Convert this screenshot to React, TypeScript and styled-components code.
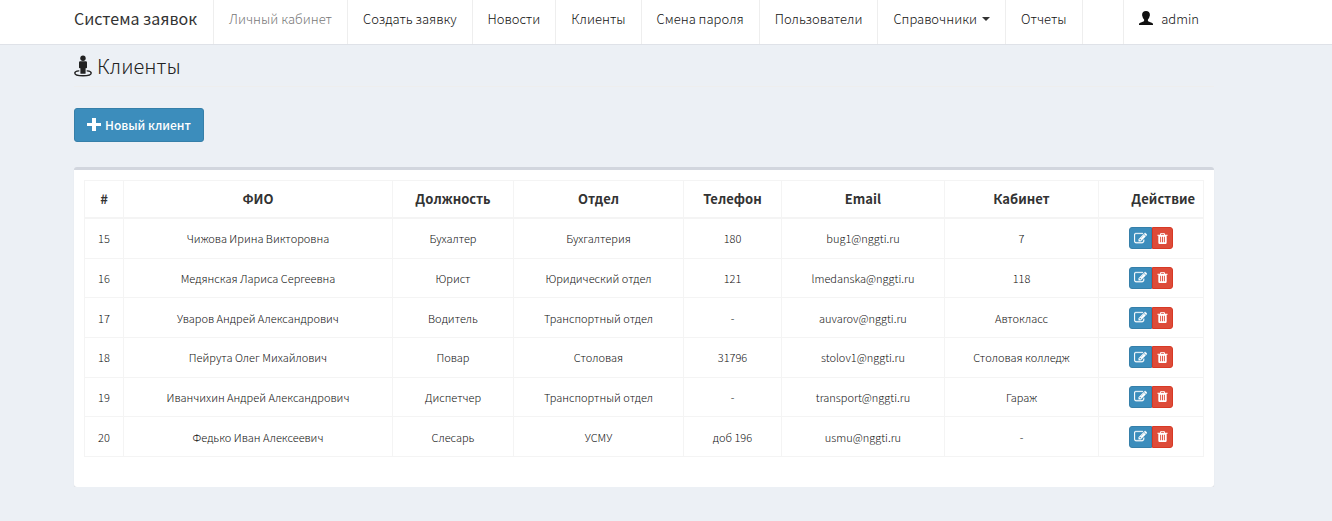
import React from "react";
import styled, { createGlobalStyle, css } from "styled-components";

const GlobalStyle = createGlobalStyle`
  *, *::before, *::after { box-sizing: border-box; }
  body {
    margin: 0;
    background: #ecf0f5;
    color: #333;
    font-family: "Noto Sans CJK SC", "Open Sans", sans-serif;
    font-size: 13px;
    line-height: 20px;
  }
  svg { flex-shrink: 0; }
`;

const Header = styled.header`
  background: #fff;
  border-bottom: 1px solid #dfe2e8;
  padding-right: 44px;
`;

const Container = styled.div`
  max-width: 1170px;
  margin: 0 auto;
  padding: 0 15px;
`;

const NavBar = styled(Container)`
  display: flex;
  align-items: stretch;
`;

const Brand = styled.a`
  padding: 8px 16px 16px 0;
  border-right: 1px solid #eee;
  color: #333;
  font-size: 16px;
  text-decoration: none;
  white-space: nowrap;
`;

const NavList = styled.ul`
  display: flex;
  margin: 0;
  padding: 0;
  list-style: none;
`;

const NavItem = styled.li`
  display: flex;
  border-right: 1px solid #eee;
`;

const NavLink = styled.a<{ $muted?: boolean }>`
  display: flex;
  align-items: center;
  padding: 9px 15px 15px;
  color: ${(p) => (p.$muted ? "#777" : "#111")};
  font-weight: 300;
  text-decoration: none;
  white-space: nowrap;
`;

const UserLink = styled(NavLink)`
  gap: 8px;
  margin-left: auto;
  border-left: 1px solid #eee;
`;

const Caret = styled.span`
  margin-left: 5px;
  border-top: 4px solid #333;
  border-left: 4px solid transparent;
  border-right: 4px solid transparent;
`;

const Page = styled.main`
  padding-right: 44px;
`;

const Title = styled.h1`
  display: flex;
  align-items: center;
  gap: 5px;
  margin: 0 0 21px;
  padding: 8px 0 8px;
  border-bottom: 1px solid #eee;
  color: #222;
  font-size: 20px;
  font-weight: 300;
  line-height: 25px;
`;

const PrimaryButton = styled.button`
  display: inline-flex;
  align-items: center;
  gap: 4px;
  height: 34px;
  padding: 0 12px;
  border: 1px solid #367fa9;
  border-radius: 3px;
  background: #3c8dbc;
  color: #fff;
  font: inherit;
  font-size: 12px;
  font-weight: 500;
  cursor: pointer;
`;

const Panel = styled.section`
  margin-top: 25px;
  padding: 10px 10px 30px;
  border-top: 3px solid #d2d6de;
  border-radius: 3px;
  background: #fff;
  box-shadow: 0 1px 1px rgba(0, 0, 0, 0.1);
`;

const Table = styled.table`
  width: 100%;
  height: 277px;
  table-layout: fixed;
  border-collapse: collapse;
  text-align: center;
`;

const cell = css`
  padding: 0 8px;
  border: 1px solid #f4f4f4;
`;

const HeadCell = styled.th<{ $align?: string }>`
  ${cell}
  height: 37px;
  border-bottom-width: 2px;
  font-weight: 700;
  text-align: ${(p) => p.$align || "center"};
`;

const Cell = styled.td`
  ${cell}
  color: #111;
  font-size: 11px;
  font-weight: 300;
`;

const Actions = styled.div`
  display: flex;
  justify-content: center;
`;

const ActionButton = styled.button<{ $danger?: boolean }>`
  display: flex;
  align-items: center;
  justify-content: center;
  width: ${(p) => (p.$danger ? 21 : 23)}px;
  height: 22px;
  padding: 0;
  border: 1px solid ${(p) => (p.$danger ? "#d73925" : "#367fa9")};
  border-radius: ${(p) => (p.$danger ? "0 3px 3px 0" : "3px 0 0 3px")};
  background: ${(p) => (p.$danger ? "#dd4b39" : "#3c8dbc")};
  color: #fff;
  cursor: pointer;
`;

const StreetViewIcon = () => (
  <svg width="18" height="22" viewBox="0 0 18 22" fill="currentColor" aria-hidden="true">
    <circle cx="9" cy="3.200" r="2.700" />
    <path d="M6.200 6.200h5.600q1.200 0 1.200 1.200v5q0 .8-.8.8h-.6v5q0 .6-.6.6H7q-.6 0-.6-.6v-5h-.6q-.8 0-.8-.8v-5Q5 6.200 6.200 6.200z" />
    <path
      d="M4.800 15.900C2.200 16.200.8 17 .8 18c0 1.700 3.600 2.800 8.200 2.800s8.200-1.100 8.200-2.800c0-1-1.400-1.800-4-2.100"
      fill="none"
      stroke="currentColor"
      strokeWidth="1.400"
      strokeLinecap="round"
    />
  </svg>
);

const PlusIcon = () => (
  <svg width="14" height="14" viewBox="0 0 14 14" fill="currentColor" aria-hidden="true">
    <path d="M5 0h4v5h5v3H9v5H5V8H0V5h5z" />
  </svg>
);

const UserIcon = () => (
  <svg width="14" height="16" viewBox="0 0 14 16" fill="currentColor" aria-hidden="true">
    <path d="M7 0C4.600 0 3 1.500 3.100 3.800c0 .9.200 1.500.5 2 .2 1.300.8 2.100 1.500 2.700v1.200c0 .4-.3.700-.8.900C1.900 11.600 0 12 0 13.200V14h14v-.8c0-1.200-1.900-1.600-4.300-2.600-.5-.2-.8-.5-.8-.9V8.500c.7-.6 1.300-1.400 1.500-2.700.3-.5.5-1.100.5-2C11 1.500 9.400 0 7 0z" />
  </svg>
);

const EditIcon = () => (
  <svg width="13" height="13" viewBox="0 0 1792 1792" fill="currentColor" aria-hidden="true">
    <path
      stroke="currentColor"
      strokeWidth="40"
      d="M888 1184l116-116-152-152-116 116v56h96v96h56zm440-720q-16-16-33 1l-350 350q-17 17-1 33t33-1l350-350q17-17 1-33zm80 594v190q0 119-84.500 203.500t-203.500 84.500h-832q-119 0-203.500-84.500t-84.500-203.500v-832q0-119 84.500-203.500t203.500-84.500h832q63 0 117 25 15 7 18 23 3 17-9 29l-49 49q-14 14-32 8-23-6-45-6h-832q-66 0-113 47t-47 113v832q0 66 47 113t113 47h832q66 0 113-47t47-113v-126q0-13 9-22l64-64q15-15 35-7t20 29zm-96-738l288 288-672 672h-288v-288zm444 132l-92 92-288-288 92-92q28-28 68-28t68 28l152 152q28 28 28 68t-28 68z"
    />
  </svg>
);

const TrashIcon = () => (
  <svg width="13" height="13" viewBox="0 0 1792 1792" fill="currentColor" aria-hidden="true">
    <path d="M704 1376v-704q0-14-9-23t-23-9h-64q-14 0-23 9t-9 23v704q0 14 9 23t23 9h64q14 0 23-9t9-23zm256 0v-704q0-14-9-23t-23-9h-64q-14 0-23 9t-9 23v704q0 14 9 23t23 9h64q14 0 23-9t9-23zm256 0v-704q0-14-9-23t-23-9h-64q-14 0-23 9t-9 23v704q0 14 9 23t23 9h64q14 0 23-9t9-23zm-544-992h448l-48-117q-7-9-17-11h-317q-10 2-17 11zm928 32v64q0 14-9 23t-23 9h-96v948q0 83-47 143.500t-113 60.500h-832q-66 0-113-58.500t-47-141.500v-952h-96q-14 0-23-9t-9-23v-64q0-14 9-23t23-9h309l70-167q15-37 54-63t79-26h320q40 0 79 26t54 63l70 167h309q14 0 23 9t9 23z" />
  </svg>
);

const navItems: { label: string; muted?: boolean; menu?: boolean }[] = [
  { label: "Личный кабинет", muted: true },
  { label: "Создать заявку" },
  { label: "Новости" },
  { label: "Клиенты" },
  { label: "Смена пароля" },
  { label: "Пользователи" },
  { label: "Справочники", menu: true },
  { label: "Отчеты" },
];

const columns = [
  { label: "#", width: 39 },
  { label: "ФИО", width: 269 },
  { label: "Должность", width: 121 },
  { label: "Отдел", width: 170 },
  { label: "Телефон", width: 98 },
  { label: "Email", width: 163 },
  { label: "Кабинет", width: 154 },
  { label: "Действие", width: 105, align: "right" },
];
const totalWidth = columns.reduce((sum, c) => sum + c.width, 0);

const clients = [
  ["15", "Чижова Ирина Викторовна", "Бухалтер", "Бухгалтерия", "180", "bug1@nggti.ru", "7"],
  ["16", "Медянская Лариса Сергеевна", "Юрист", "Юридический отдел", "121", "lmedanska@nggti.ru", "118"],
  ["17", "Уваров Андрей Александрович", "Водитель", "Транспортный отдел", "-", "auvarov@nggti.ru", "Автокласс"],
  ["18", "Пейрута Олег Михайлович", "Повар", "Столовая", "31796", "stolov1@nggti.ru", "Столовая колледж"],
  ["19", "Иванчихин Андрей Александрович", "Диспетчер", "Транспортный отдел", "-", "transport@nggti.ru", "Гараж"],
  ["20", "Федько Иван Алексеевич", "Слесарь", "УСМУ", "доб 196", "usmu@nggti.ru", "-"],
];

export default function App() {
  return (
    <>
      <GlobalStyle />
      <Header>
        <NavBar as="nav">
          <Brand href="#">Система заявок</Brand>
          <NavList>
            {navItems.map((item) => (
              <NavItem key={item.label}>
                <NavLink href="#" $muted={item.muted}>
                  {item.label}
                  {item.menu && <Caret />}
                </NavLink>
              </NavItem>
            ))}
          </NavList>
          <UserLink href="#">
            <UserIcon />
            admin
          </UserLink>
        </NavBar>
      </Header>
      <Page>
        <Container>
          <Title>
            <StreetViewIcon />
            Клиенты
          </Title>
          <PrimaryButton type="button">
            <PlusIcon />
            Новый клиент
          </PrimaryButton>
          <Panel>
            <Table>
              <colgroup>
                {columns.map((c) => (
                  <col key={c.label} style={{ width: `${(c.width / totalWidth) * 100}%` }} />
                ))}
              </colgroup>
              <thead>
                <tr>
                  {columns.map((c) => (
                    <HeadCell key={c.label} scope="col" $align={c.align}>
                      {c.label}
                    </HeadCell>
                  ))}
                </tr>
              </thead>
              <tbody>
                {clients.map((row) => (
                  <tr key={row[0]}>
                    {row.map((value, i) => (
                      <Cell key={i}>{value}</Cell>
                    ))}
                    <Cell>
                      <Actions>
                        <ActionButton type="button" aria-label="Редактировать">
                          <EditIcon />
                        </ActionButton>
                        <ActionButton type="button" $danger aria-label="Удалить">
                          <TrashIcon />
                        </ActionButton>
                      </Actions>
                    </Cell>
                  </tr>
                ))}
              </tbody>
            </Table>
          </Panel>
        </Container>
      </Page>
    </>
  );
}
